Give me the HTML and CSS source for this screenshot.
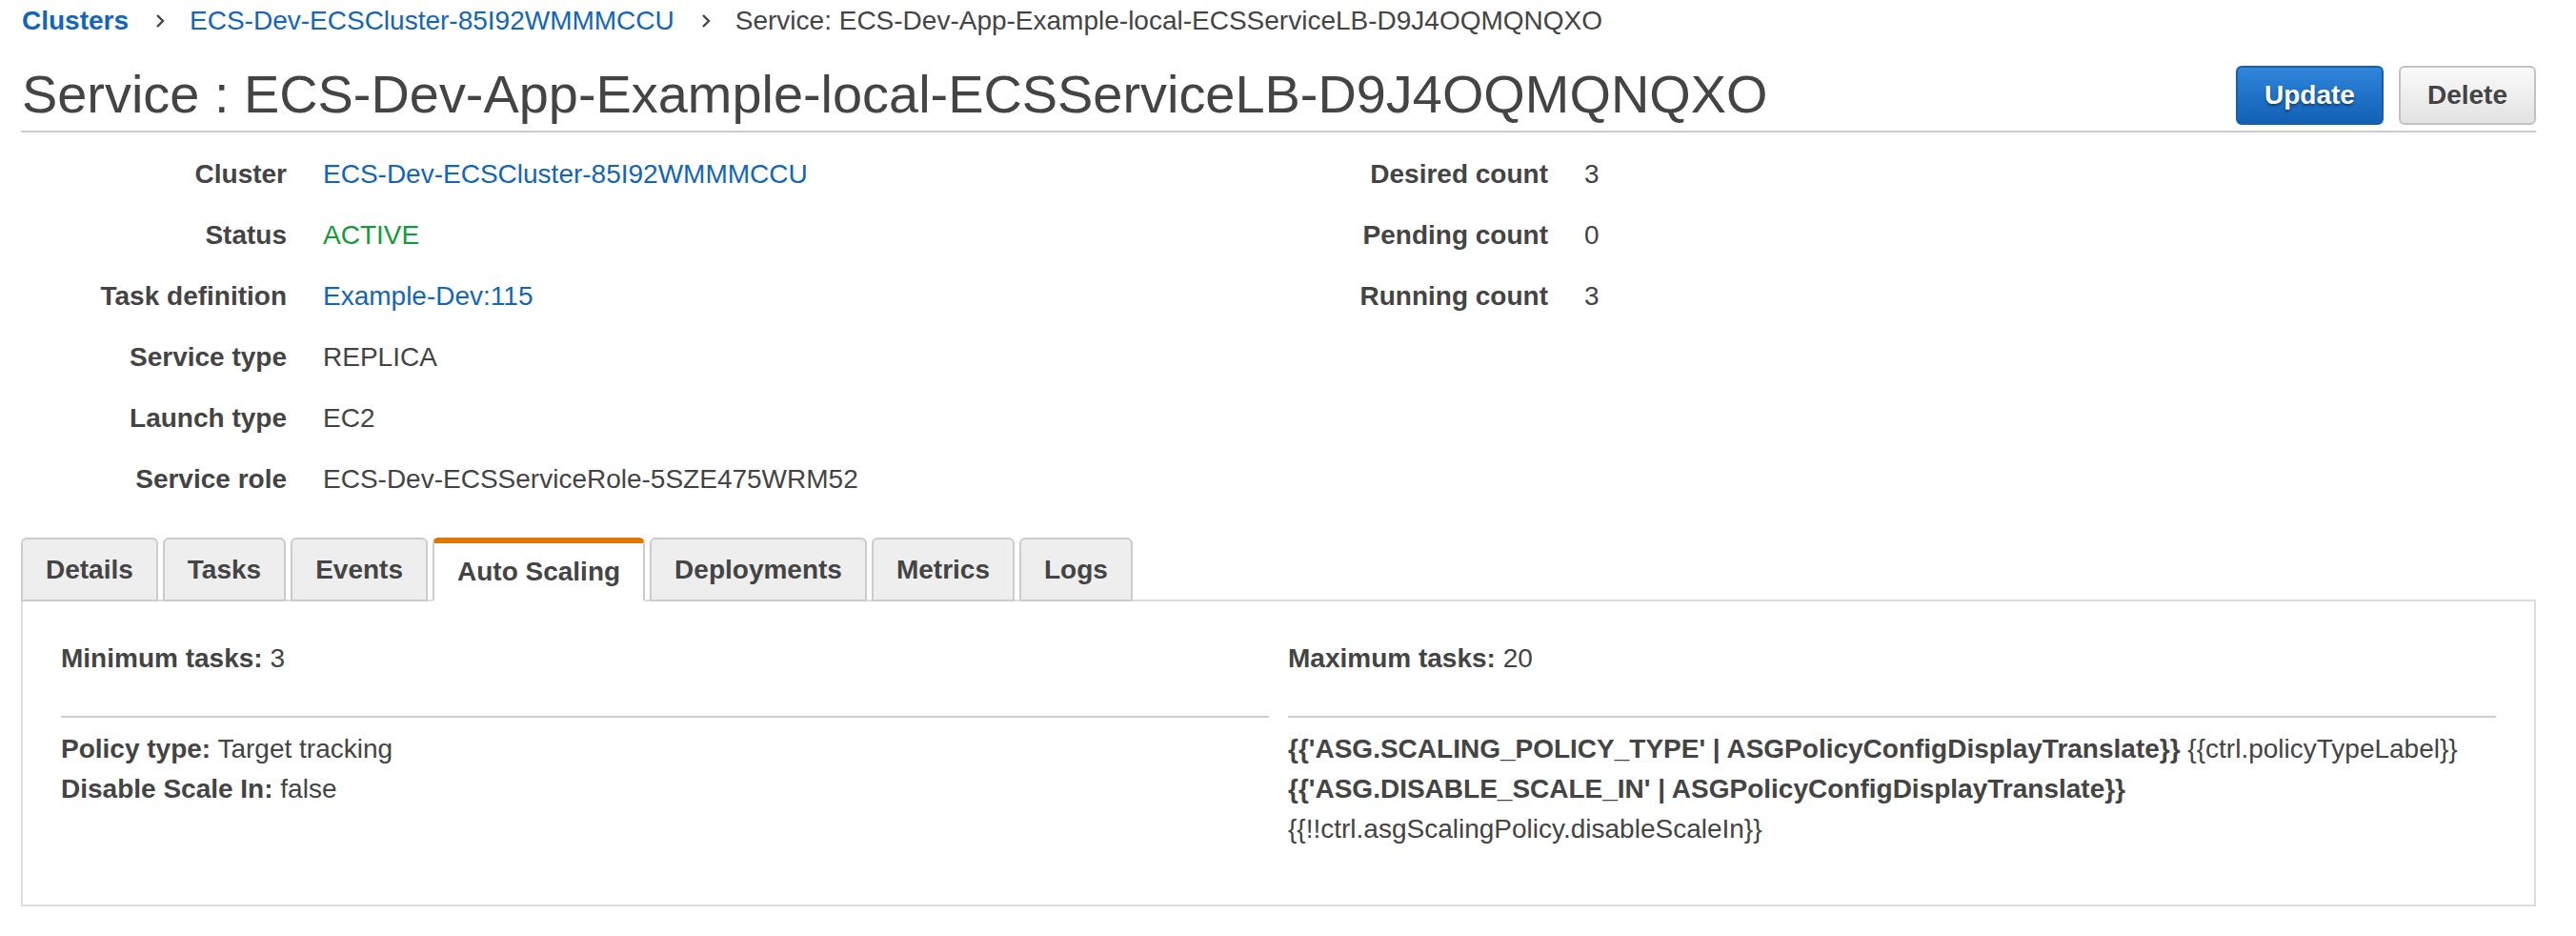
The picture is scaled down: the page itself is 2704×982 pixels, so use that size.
FILE: index.html
```html
<!DOCTYPE html>
<html lang="en">
<head>
<meta charset="utf-8">
<title>Service : ECS-Dev-App-Example-local-ECSServiceLB-D9J4OQMQNQXO</title>
<link rel="stylesheet" href="styles.css">
</head>
<body>
<nav class="breadcrumb">
  <a class="crumb crumb-root" href="#">Clusters</a>
  <svg class="chev" width="10" height="16" viewBox="0 0 10 16"><path d="M2 2 L8 8 L2 14" fill="none" stroke="#444" stroke-width="2.4"/></svg>
  <a class="crumb" href="#">ECS-Dev-ECSCluster-85I92WMMMCCU</a>
  <svg class="chev" width="10" height="16" viewBox="0 0 10 16"><path d="M2 2 L8 8 L2 14" fill="none" stroke="#444" stroke-width="2.4"/></svg>
  <span class="crumb crumb-current">Service: ECS-Dev-App-Example-local-ECSServiceLB-D9J4OQMQNQXO</span>
</nav>

<header class="page-header">
  <h1 class="title">Service : ECS-Dev-App-Example-local-ECSServiceLB-D9J4OQMQNQXO</h1>
  <div class="actions">
    <button class="btn btn-primary">Update</button>
    <button class="btn btn-default">Delete</button>
  </div>
</header>

<section class="summary">
  <dl class="props">
    <div class="prop"><dt>Cluster</dt><dd><a href="#">ECS-Dev-ECSCluster-85I92WMMMCCU</a></dd></div>
    <div class="prop"><dt>Status</dt><dd class="ok">ACTIVE</dd></div>
    <div class="prop"><dt>Task definition</dt><dd><a href="#">Example-Dev:115</a></dd></div>
    <div class="prop"><dt>Service type</dt><dd>REPLICA</dd></div>
    <div class="prop"><dt>Launch type</dt><dd>EC2</dd></div>
    <div class="prop"><dt>Service role</dt><dd>ECS-Dev-ECSServiceRole-5SZE475WRM52</dd></div>
  </dl>
  <dl class="props">
    <div class="prop"><dt>Desired count</dt><dd>3</dd></div>
    <div class="prop"><dt>Pending count</dt><dd>0</dd></div>
    <div class="prop"><dt>Running count</dt><dd>3</dd></div>
  </dl>
</section>

<ul class="tabs">
  <li class="tab">Details</li>
  <li class="tab">Tasks</li>
  <li class="tab">Events</li>
  <li class="tab active">Auto Scaling</li>
  <li class="tab">Deployments</li>
  <li class="tab">Metrics</li>
  <li class="tab">Logs</li>
</ul>

<div class="panel">
  <div class="grid top">
    <div><b>Minimum tasks:</b> 3</div>
    <div><b>Maximum tasks:</b> 20</div>
  </div>
  <div class="grid bottom">
    <div class="policy">
      <div><b>Policy type:</b> Target tracking</div>
      <div><b>Disable Scale In:</b> false</div>
    </div>
    <div class="policy">
      <div><b>{{'ASG.SCALING_POLICY_TYPE' | ASGPolicyConfigDisplayTranslate}}</b> {{ctrl.policyTypeLabel}}</div>
      <div><b>{{'ASG.DISABLE_SCALE_IN' | ASGPolicyConfigDisplayTranslate}}</b> {{!!ctrl.asgScalingPolicy.disableScaleIn}}</div>
    </div>
  </div>
</div>
</body>
</html>
```

FILE: styles.css
```css
html, body {
  margin: 0;
  background: #fff;
}
body {
  padding: 0 42px 0 22px;
  font-family: "Liberation Sans", Arial, sans-serif;
  font-size: 28px;
  color: #444;
}
a {
  color: #1166bb;
  text-decoration: none;
}

/* breadcrumb */
.breadcrumb {
  display: flex;
  align-items: center;
  padding-top: 2px;
  height: 40px;
  line-height: 40px;
  padding-left: 1px;
}
.crumb-root {
  font-weight: bold;
}
.chev {
  margin: 0 26px 0 28px;
}
.crumb-current {
  color: #444;
}

/* header */
.page-header {
  display: flex;
  justify-content: space-between;
  align-items: flex-end;
  margin-top: 25px;
  padding-bottom: 6px;
  border-bottom: 2px solid #cccccc;
}
.title {
  margin: 0;
  font-size: 55.9px;
  font-weight: normal;
  line-height: 64px;
  color: #444;
  padding-left: 1px;
}
.actions {
  display: flex;
  gap: 16px;
}
.btn {
  height: 62px;
  padding: 0 28px;
  border: 2px solid;
  border-radius: 6px;
  font-family: "Liberation Sans", Arial, sans-serif;
  font-size: 28px;
  font-weight: bold;
  line-height: 58px;
}
.btn-primary {
  color: #fff;
  border-color: #1a5eab;
  background: linear-gradient(#2f86db, #1160b6);
  text-shadow: 0 2px 3px rgba(0, 0, 0, 0.45);
}
.btn-default {
  color: #444;
  border-color: #c2c2c2;
  background: linear-gradient(#fafafa, #e2e2e2);
}

/* summary */
.summary {
  display: grid;
  grid-template-columns: 1324px 1fr;
  margin-top: 12px;
}
.props {
  margin: 0;
}
.prop {
  display: flex;
  height: 64px;
  line-height: 64px;
}
.prop dt {
  width: 279px;
  text-align: right;
  font-weight: bold;
  flex: none;
}
.prop dd {
  margin: 0 0 0 38px;
}
.ok {
  color: #129c38;
}

/* tabs */
.tabs {
  display: flex;
  gap: 5px;
  list-style: none;
  margin: 29px 0 -2px 0;
  padding: 0;
  position: relative;
  z-index: 1;
}
.tab {
  height: 62px;
  line-height: 61px;
  padding: 1px 24px 0;
  border: 2px solid #cccccc;
  border-radius: 6px 6px 0 0;
  background: #eeeeee;
  font-weight: bold;
  color: #444;
}
.tab.active {
  background: #fff;
  border-top: 6px solid #e07700;
  height: 58px;
  line-height: 57px;
  border-bottom-color: #fff;
}

/* panel */
.panel {
  border: 2px solid #dddddd;
  padding: 39px 40px 58px;
}
.grid {
  display: grid;
  grid-template-columns: 1fr 1fr;
  column-gap: 20px;
  line-height: 42px;
}
.top {
  padding-bottom: 39px;
}
.bottom > div {
  border-top: 2px solid #cccccc;
  padding-top: 12px;
}
```
